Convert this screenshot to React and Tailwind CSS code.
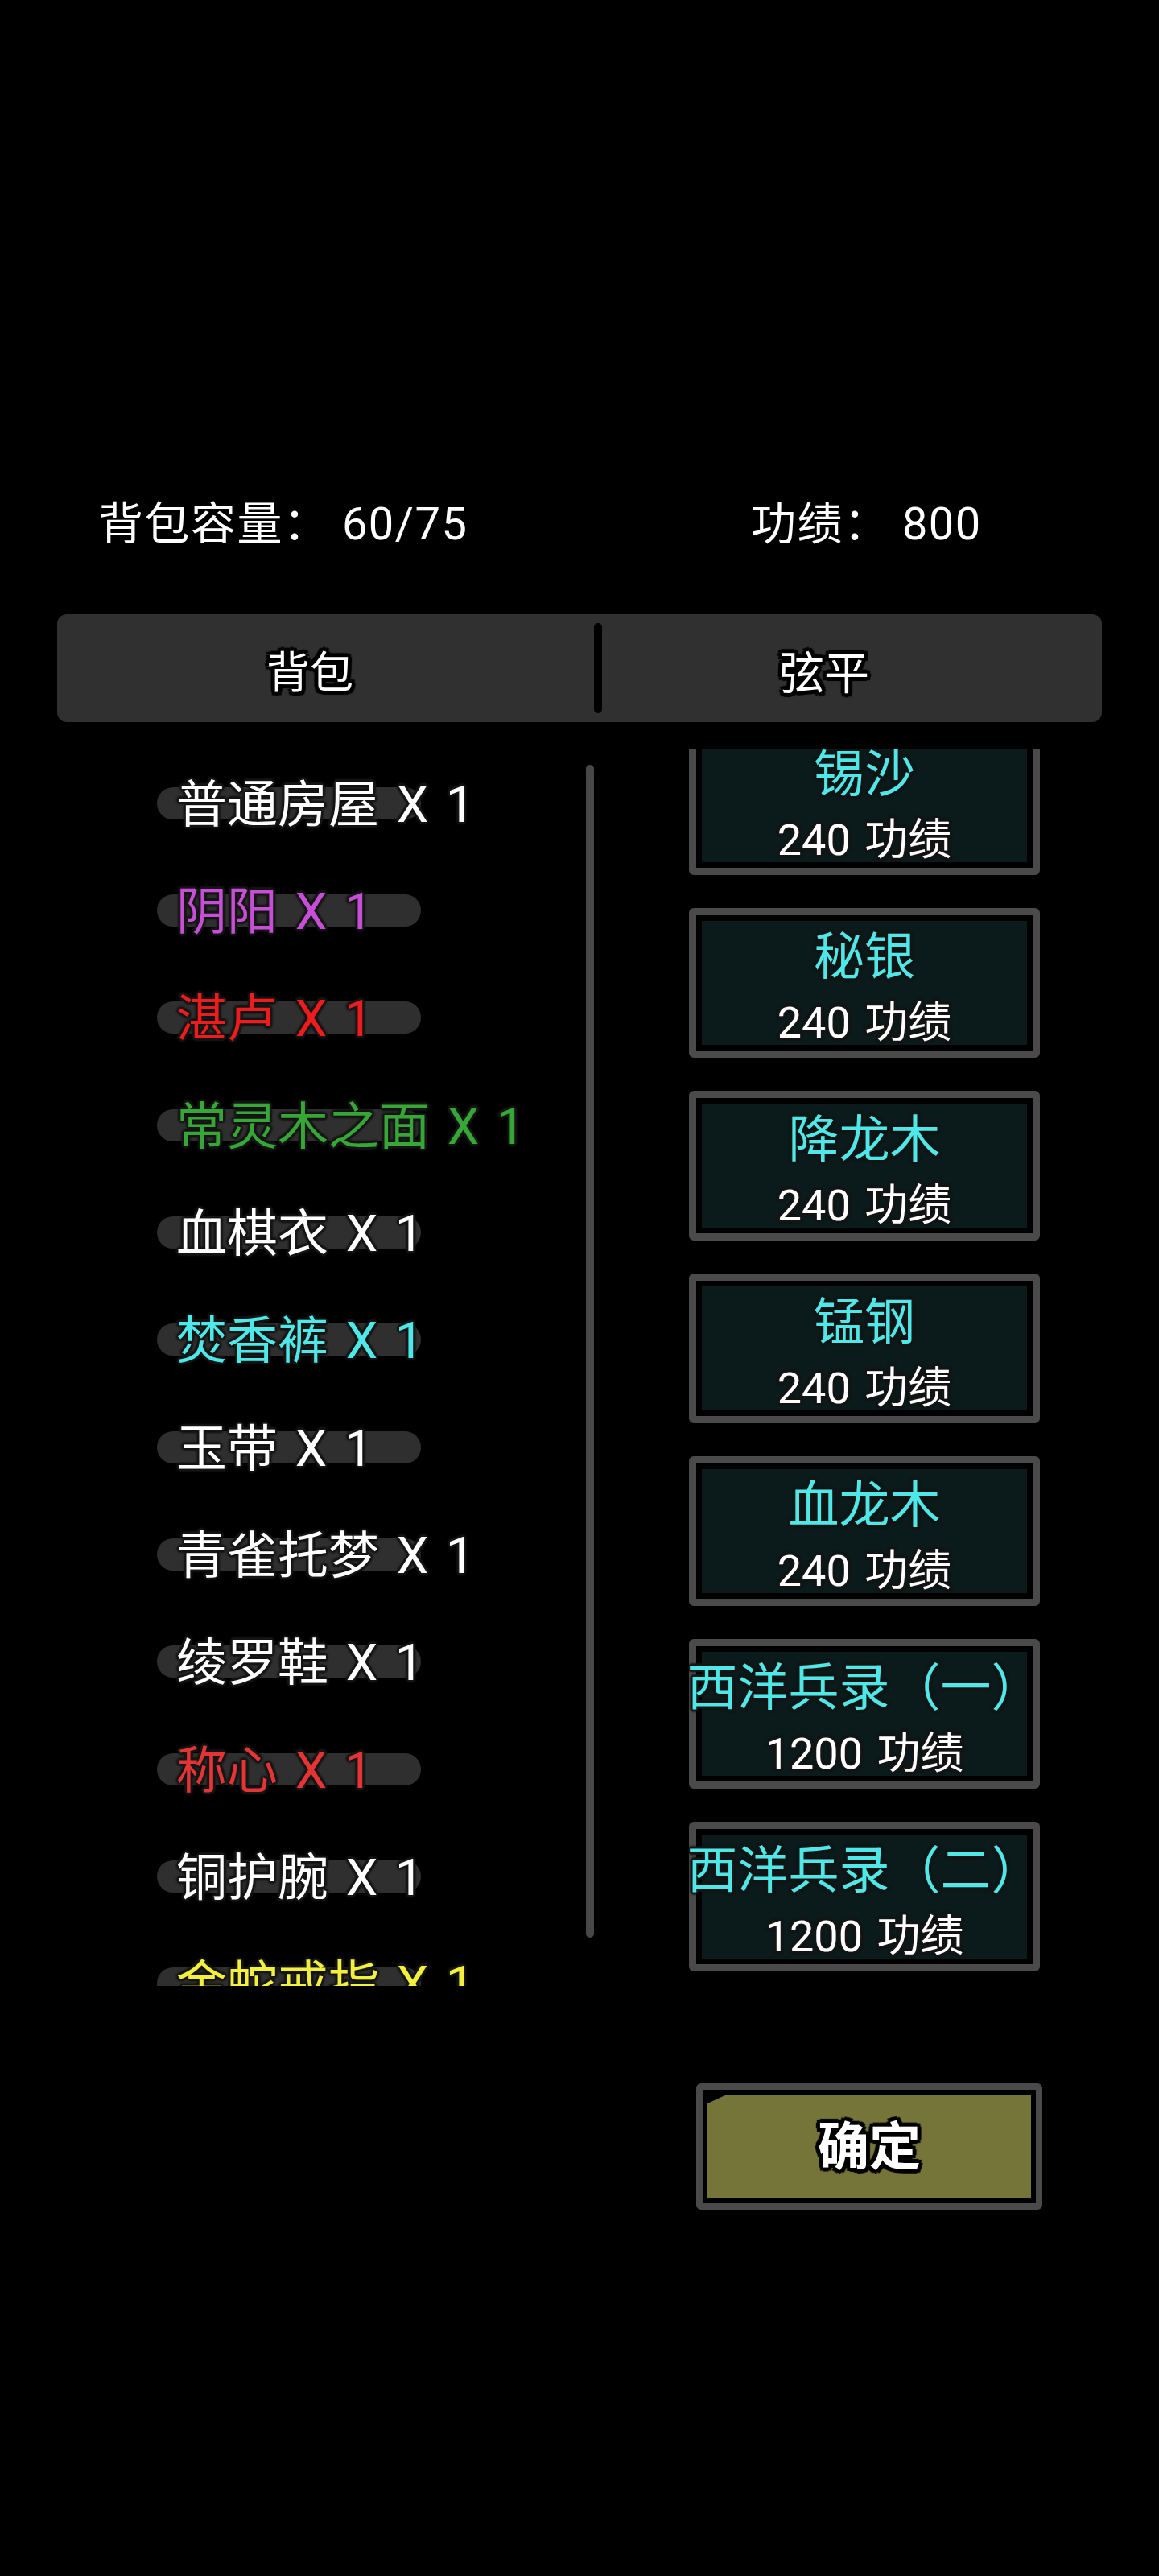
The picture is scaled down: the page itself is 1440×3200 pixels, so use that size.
import React from 'react';

const bagItems = [
  { name: '普通房屋', color: 'text-white' },
  { name: '阴阳', color: 'text-[#c64fd6]' },
  { name: '湛卢', color: 'text-[#ee1c1c]' },
  { name: '常灵木之面', color: 'text-[#36a636]' },
  { name: '血棋衣', color: 'text-white' },
  { name: '焚香裤', color: 'text-[#4ee8e8]' },
  { name: '玉带', color: 'text-white' },
  { name: '青雀托梦', color: 'text-white' },
  { name: '绫罗鞋', color: 'text-white' },
  { name: '称心', color: 'text-[#e43434]' },
  { name: '铜护腕', color: 'text-white' },
  { name: '金蛇戒指', color: 'text-[#f2f03c]' },
];

const shopItems = [
  { name: '锡沙', cost: 240 },
  { name: '秘银', cost: 240 },
  { name: '降龙木', cost: 240 },
  { name: '锰钢', cost: 240 },
  { name: '血龙木', cost: 240 },
  { name: '西洋兵录（一）', cost: 1200 },
  { name: '西洋兵录（二）', cost: 1200 },
];

// soft dark halo used by most game text
const thinOutline =
  '[text-shadow:-3px_0_2px_#161616,3px_0_2px_#161616,0_-3px_2px_#161616,0_3px_2px_#161616,-2px_-2px_2px_#161616,2px_2px_2px_#161616,-2px_2px_2px_#161616,2px_-2px_2px_#161616]';
// heavy black stroke for tab labels and the confirm button
const thickOutline =
  '[text-shadow:-5px_0_1px_#000,5px_0_1px_#000,0_-5px_1px_#000,0_5px_1px_#000,-4px_-4px_1px_#000,4px_4px_1px_#000,-4px_4px_1px_#000,4px_-4px_1px_#000]';

function BagRow({ item }) {
  return (
    <div className="h-[133.33px] shrink-0 flex items-center">
      <div className="grid items-center">
        <div className="[grid-area:1/1] w-[328px] h-[40px] rounded-full bg-[#2f2f2f]" />
        <div
          className={`[grid-area:1/1] pl-[24px] pt-[4px] text-[63px] leading-[80px] [word-spacing:6px] whitespace-nowrap ${item.color} ${thinOutline}`}
        >
          {item.name} X 1
        </div>
      </div>
    </div>
  );
}

function ShopButton({ item }) {
  return (
    <div className="shrink-0 w-[436px] h-[186px] border-[9px] border-[#4a4a4a] rounded-[6px] bg-black p-[7px]">
      <div className="h-full bg-[#0b1a1a] flex flex-col items-center pt-[5px]">
        <div className={`h-[80px] leading-[80px] text-[63px] whitespace-nowrap text-[#4ee8e8] ${thinOutline}`}>
          {item.name}
        </div>
        <div className={`mt-[12px] h-[60px] leading-[60px] text-[54px] [word-spacing:4px] whitespace-nowrap text-white ${thinOutline}`}>
          {item.cost} 功绩
        </div>
      </div>
    </div>
  );
}

export default function App() {
  return (
    <div className="w-[1440px] h-[3200px] bg-black text-white font-[Roboto,'Noto_Sans_CJK_SC',sans-serif] pt-[611px]">
      {/* capacity / merit header */}
      <div className="flex pl-[122px] text-[56px] leading-[80px] tracking-[1.5px] whitespace-nowrap">
        <div className="w-[811px]">背包容量： 60/75</div>
        <div>功绩： 800</div>
      </div>

      {/* tabs */}
      <div className="mt-[72px] ml-[71px] w-[1298px] h-[134px] rounded-[12px] bg-[#303030] flex items-center">
        <div className={`w-[628px] flex justify-center mt-[14px] text-[54px] leading-[70px] ${thickOutline}`}>背包</div>
        <div className="ml-[39px] w-[10px] h-[112px] rounded-full bg-black" />
        <div className={`w-[552px] flex justify-center mt-[14px] text-[56px] leading-[70px] ${thickOutline}`}>弦平</div>
      </div>

      {/* lists */}
      <div className="mt-[34px] flex pl-[195px] h-[1536px]">
        <div className="w-[543px] flex">
          <div className="w-[533px] h-full overflow-hidden flex flex-col">
            {bagItems.map((item) => (
              <BagRow key={item.name} item={item} />
            ))}
          </div>
          <div className="mt-[19px] w-[10px] h-[1457px] rounded-full bg-[#484848]" />
        </div>

        <div className="ml-[118px] w-[436px] h-full overflow-hidden">
          <div className="-mt-[30px] flex flex-col gap-[41px]">
            {shopItems.map((item) => (
              <ShopButton key={item.name} item={item} />
            ))}
          </div>
        </div>
      </div>

      {/* confirm */}
      <div className="mt-[121px] ml-[865px] w-[430px] h-[157px] border-[8px] border-[#4a4a4a] rounded-[6px] bg-black p-[6px] flex">
        <div className="flex-1 bg-[#767539] [clip-path:polygon(24px_0,100%_0,100%_100%,0_100%,0_11px)] flex items-center justify-center">
          <span className={`text-[64px] font-semibold leading-[80px] pt-[2px] ${thickOutline}`}>确定</span>
        </div>
      </div>
    </div>
  );
}
